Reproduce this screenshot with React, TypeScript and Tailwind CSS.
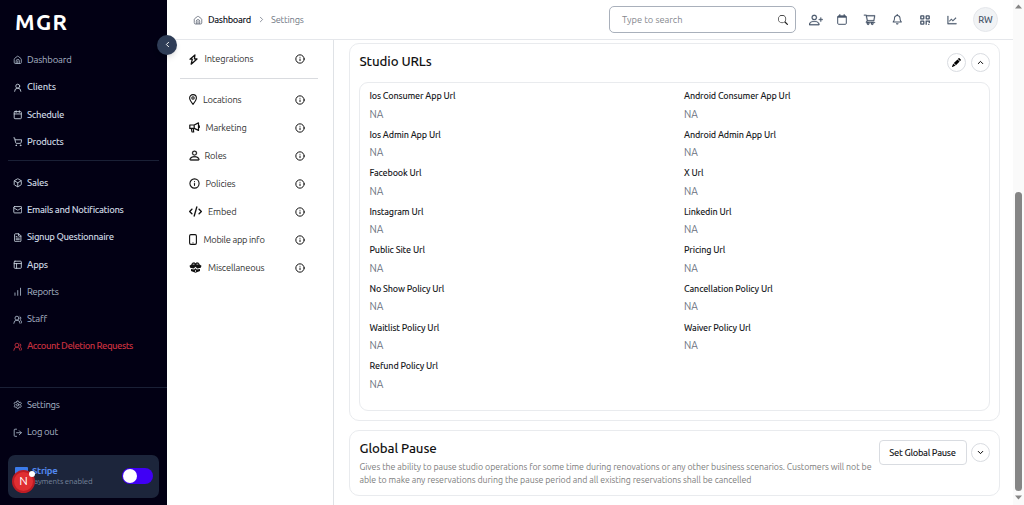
import React from "react";
import {
  UserRound, Calendar, ShoppingCart, Box, Mail, FileText, PanelsTopLeft,
  ChartNoAxesColumnIncreasing, UsersRound, Settings, LogOut, ChevronLeft,
  ChevronRight, ChevronUp, ChevronDown, Info,
} from "lucide-react";
import { BsPersonPlus, BsSearch, BsPencilFill, BsPerson } from "react-icons/bs";
import { FaRegBell } from "react-icons/fa";
import { FaCode } from "react-icons/fa6";
import { AiOutlineShoppingCart, AiOutlineLineChart } from "react-icons/ai";

type IconProps = { className?: string; strokeWidth?: number };
type Icon = React.ComponentType<IconProps>;
type Item = { icon: Icon; label: string; cls: string };

function House({ className }: IconProps) {
  return (
    <svg className={className} viewBox="0 0 24 24" fill="none" stroke="currentColor" strokeWidth="2.1" strokeLinejoin="round" strokeLinecap="round">
      <path d="M3 10.5a2 2 0 0 1 .8-1.6l7-5.4a2 2 0 0 1 2.4 0l7 5.4a2 2 0 0 1 .8 1.6V19a2.5 2.5 0 0 1-2.5 2.5h-13A2.5 2.5 0 0 1 3 19z" />
      <path d="M8 21v-6a4 4 0 0 1 8 0v6M12 15v6" />
    </svg>
  );
}
function Bolt({ className }: IconProps) {
  return (
    <svg className={className} viewBox="0 0 10 12" fill="none" stroke="currentColor" strokeWidth="1.4" strokeLinejoin="round">
      <path d="M6.6.9 1.1 5.7h2.6L2.4 11.2 8.9 5.4H6z" />
    </svg>
  );
}
function Pin({ className }: IconProps) {
  return (
    <svg className={className} viewBox="0 0 8 11" fill="none" stroke="currentColor" strokeWidth="1.1" strokeLinejoin="round">
      <path d="M4 10.3C2.3 8.2.6 6 .6 4a3.4 3.4 0 0 1 6.8 0c0 2-1.7 4.2-3.4 6.3z" />
      <circle cx="4" cy="4" r="1.2" />
    </svg>
  );
}
function Megaphone({ className }: IconProps) {
  return (
    <svg className={className} viewBox="0 0 11 11" fill="none" stroke="currentColor" strokeWidth="1.2" strokeLinejoin="round" strokeLinecap="round">
      <path d="M.8 3h4.4L9.5.9v7.5L5.2 6.4H.8zM5.2 3v3.4M2.3 6.5l.7 3.5h1.7L4.2 6.5M10.3 3.8v1.6" />
    </svg>
  );
}
function Phone({ className }: IconProps) {
  return (
    <svg className={className} viewBox="0 0 8 11" fill="none" stroke="currentColor">
      <rect x=".6" y=".6" width="6.8" height="9.8" rx="1.3" strokeWidth="1.1" />
      <path d="M3.2 8.9h1.6" strokeWidth=".6" />
    </svg>
  );
}
function OpenBox({ className }: IconProps) {
  return (
    <svg className={className} viewBox="0 0 13 11" fill="currentColor">
      <path d="M2.4 2.6C2.8.9 4.2.2 5.5.4l1 .9 1-.9c1.400-.2 2.700.5 3.100 2.200l1.900 1.200-.7 2-3.600.7-1.700-1.700-1.700 1.700-3.600-.7-.7-2z" />
      <path d="M2 6.900l3.200.6 1.300-1.300 1.300 1.300 3.200-.6v2.200L6.500 10.800 2 9.100z" />
      <path d="M3.700 2.200h1.800M7.500 2.200h1.800M6.500 8v2" stroke="white" strokeWidth=".7" />
    </svg>
  );
}
function CalendarTop({ className }: IconProps) {
  return (
    <svg className={className} viewBox="0 0 10 11" fill="none" stroke="currentColor">
      <rect x=".7" y="1.9" width="8.6" height="8.4" rx="1" strokeWidth="1" />
      <path d="M.7 2.8h8.6" strokeWidth="1.8" />
      <path d="M2.8.3v2M7.2.3v2" strokeWidth="1.2" />
    </svg>
  );
}
function Qr({ className }: IconProps) {
  return (
    <svg className={className} viewBox="0 0 10 10" fill="none" stroke="currentColor" strokeWidth="1.3">
      <rect x=".8" y=".8" width="3" height="3" rx=".4" />
      <rect x="6.2" y=".8" width="3" height="3" rx=".4" />
      <rect x=".8" y="6.2" width="3" height="3" rx=".4" />
      <path d="M5.6 6.2h3.7v1.8M6.2 6v3.7M8.2 9.3h1.2" />
    </svg>
  );
}

const primary: Item[] = [
  { icon: House, label: "Dashboard", cls: "text-[#a9b5c6] tracking-[-0.2px]" },
  { icon: UserRound, label: "Clients", cls: "text-[#cbd5e1] font-medium tracking-[-0.18px]" },
  { icon: Calendar, label: "Schedule", cls: "text-[#cbd5e1] font-medium tracking-[-0.32px]" },
  { icon: ShoppingCart, label: "Products", cls: "text-[#cbd5e1] font-medium tracking-[-0.3px]" },
];
const secondary: Item[] = [
  { icon: Box, label: "Sales", cls: "text-[#cbd5e1] font-medium tracking-[-0.28px]" },
  { icon: Mail, label: "Emails and Notifications", cls: "text-[#cbd5e1] font-medium tracking-[-0.36px]" },
  { icon: FileText, label: "Signup Questionnaire", cls: "text-[#cbd5e1] font-medium tracking-[-0.36px]" },
  { icon: PanelsTopLeft, label: "Apps", cls: "text-[#cbd5e1] font-medium tracking-[-0.25px]" },
  { icon: ChartNoAxesColumnIncreasing, label: "Reports", cls: "text-[#a9b5c6] tracking-[-0.3px]" },
  { icon: UsersRound, label: "Staff", cls: "text-[#a9b5c6] tracking-[-0.2px]" },
  { icon: UsersRound, label: "Account Deletion Requests", cls: "text-[#c7303f] font-medium tracking-[-0.48px]" },
];
const footer: Item[] = [
  { icon: Settings, label: "Settings", cls: "text-[#a9b5c6] tracking-[-0.3px]" },
  { icon: LogOut, label: "Log out", cls: "text-[#a9b5c6] tracking-[-0.25px]" },
];

function NavRow({ icon: I, label, cls }: Item) {
  return (
    <a className={`flex h-[27.3px] items-center gap-[5px] pl-[12.5px] text-[9.5px] whitespace-nowrap ${cls}`}>
      <I className="size-[9.5px] shrink-0" strokeWidth={2.2} />
      <span>{label}</span>
    </a>
  );
}

function Sidebar() {
  return (
    <aside className="flex h-full w-[167px] shrink-0 flex-col bg-[#020014]">
      <div className="h-[46.6px] pt-[7px] pl-[15px] text-[22px] leading-[30px] font-semibold tracking-[1.3px] text-white">MGR</div>
      <nav>{primary.map((i) => <NavRow key={i.label} {...i} />)}</nav>
      <div className="mx-2 mt-1 mb-[8.4px] h-px bg-[#1a2036]" />
      <nav>{secondary.map((i) => <NavRow key={i.label} {...i} />)}</nav>
      <div className="mt-auto h-[118px] border-t border-[#1a2036] pt-[3.4px]">
        {footer.map((i) => <NavRow key={i.label} {...i} />)}
        <div className="relative mx-2 mt-[8.6px] flex h-[43px] items-center justify-between rounded-[7px] bg-[#1c253b] pr-[6.5px] pl-[7px]">
          <div className="flex items-start gap-[4px]">
            <span className="mt-px h-[11px] w-[13px] rounded-[1px] bg-[#3b7bea]" />
            <div className="-mt-px flex flex-col">
              <span className="text-[9.5px] leading-[11px] font-semibold tracking-[-0.3px] text-[#5288ee]">Stripe</span>
              <span className="pl-[2px] text-[8px] leading-[11px] tracking-[-0.18px] text-[#76839a]">ayments enabled</span>
            </div>
          </div>
          <span className="flex h-[16px] w-[31px] items-center rounded-full bg-[#4000f5] pl-px">
            <span className="size-[14px] rounded-full bg-white" />
          </span>
          <span className="absolute top-[15px] left-[4px] flex size-[23px] items-center justify-center rounded-full border-2 border-[#bd1c24] bg-[#e02e32] text-[12px] text-white">N</span>
          <span className="absolute top-[16px] left-[21px] size-[6px] rounded-full bg-white" />
        </div>
      </div>
    </aside>
  );
}

function Header() {
  return (
    <header className="flex h-10 shrink-0 items-center border-b border-[#e5e7eb] pr-[15px] pl-[26px] text-[9.3px]">
      <House className="size-[10px] text-[#6b7280]" />
      <span className="ml-[5px] font-medium tracking-[-0.35px] text-[#14181f]">Dashboard</span>
      <ChevronRight className="ml-[6.5px] size-[9px] text-[#6b7280]" />
      <span className="ml-[4.5px] tracking-[-0.2px] text-[#727986]">Settings</span>
      <div className="ml-auto flex h-[27px] w-[187px] items-center justify-between rounded-[5px] border border-[#a9b0bb] pr-[7px] pl-3">
        <span className="text-[#85888e]">Type to search</span>
        <BsSearch className="size-[10px] text-[#222]" />
      </div>
      <div className="ml-[12.5px] flex items-center text-[#475569]">
        <BsPersonPlus className="size-[14px] stroke-current stroke-[0.3]" />
        <CalendarTop className="ml-[14.5px] h-[11px] w-[10px]" />
        <AiOutlineShoppingCart className="ml-[16px] size-[13px] stroke-current stroke-[20]" />
        <FaRegBell className="ml-[16px] size-[10.5px]" />
        <Qr className="ml-[17.5px] size-[10px]" />
        <AiOutlineLineChart className="ml-[16px] size-[12px] stroke-current stroke-[20]" />
      </div>
      <span className="ml-[15px] flex size-[25px] items-center justify-center rounded-full border border-[#e5e7eb] bg-[#f1f3f5] text-[9.3px] font-medium text-[#475569]">RW</span>
    </header>
  );
}

const settings: Item[] = [
  { icon: Pin, label: "Locations", cls: "h-[11px] w-[8px] mr-[6px]" },
  { icon: Megaphone, label: "Marketing", cls: "h-[11px] w-[11px] mr-[5.5px]" },
  { icon: BsPerson, label: "Roles", cls: "h-[13px] w-[13px] -ml-[1.5px] mr-[4px] stroke-current stroke-[0.4]" },
  { icon: Info, label: "Policies", cls: "h-[11px] w-[11px] mr-[5.5px]" },
  { icon: FaCode, label: "Embed", cls: "h-[11px] w-[13px] mr-[6px]" },
  { icon: Phone, label: "Mobile app info", cls: "h-[11px] w-[8px] mr-[6.5px]" },
  { icon: OpenBox, label: "Miscellaneous", cls: "h-[11px] w-[13px] mr-[6px]" },
];

function SettingRow({ icon: I, label, cls }: Item) {
  return (
    <div className="flex h-7 items-center pr-[13px] pl-[9px] text-[9.3px] whitespace-nowrap text-[#333]">
      <I className={`shrink-0 text-[#111] ${cls}`} strokeWidth={2.4} />
      <span className={label === "Mobile app info" ? "tracking-[-0.28px]" : "tracking-[-0.17px]"}>{label}</span>
      <Info className="ml-auto size-[10px] text-[#111]" strokeWidth={2.4} />
    </div>
  );
}

const urls = [
  "Ios Consumer App Url", "Android Consumer App Url", "Ios Admin App Url", "Android Admin App Url",
  "Facebook Url", "X Url", "Instagram Url", "Linkedin Url", "Public Site Url", "Pricing Url",
  "No Show Policy Url", "Cancellation Policy Url", "Waitlist Policy Url", "Waiver Policy Url", "Refund Policy Url",
];

function RoundButton({ children }: { children: React.ReactNode }) {
  return <button className="flex size-[19px] shrink-0 items-center justify-center rounded-full border border-[#d9dce1] text-black">{children}</button>;
}

export default function App() {
  return (
    <div className="relative flex h-[505px] w-[1024px] overflow-hidden bg-white font-['Ubuntu','Noto_Sans',sans-serif]">
      <Sidebar />
      <div className="-ml-px flex min-w-0 flex-1 flex-col pl-px">
        <Header />
        <div className="flex min-h-0 flex-1">
          <div className="w-[167px] shrink-0 border-r border-[#dfe2e6] pt-[5px] pr-[15px] pl-[13px]">
            <SettingRow icon={Bolt} label="Integrations" cls="h-[11px] w-[9px] mr-[6.5px]" />
            <div className="mt-[5px] mb-[6.5px] h-px bg-[#d9dbdf]" />
            {settings.map((i) => <SettingRow key={i.label} {...i} />)}
          </div>
          <main className="flex-1 pt-[3px] pr-[13px] pl-[15px]">
            <section className="h-[378px] rounded-[10px] border border-[#e9ebee] px-[9px]">
              <div className="flex h-[38px] items-center">
                <h2 className="-mt-[3px] ml-[0.5px] text-[13.3px] font-medium tracking-[-0.1px] text-[#111]">Studio URLs</h2>
                <span className="-mt-px ml-auto flex gap-[5px]">
                  <RoundButton><BsPencilFill className="size-[9px]" /></RoundButton>
                  <RoundButton><ChevronUp className="size-[9px]" strokeWidth={2.6} /></RoundButton>
                </span>
              </div>
              <div className="grid h-[329px] auto-rows-[38.6px] grid-cols-[314.5px_1fr] rounded-[9px] border border-[#e9ebee] pt-[6px] pl-[9.5px]">
                {urls.map((u) => (
                  <div key={u}>
                    <div className="text-[9px] leading-[15px] font-medium tracking-[-0.15px] text-[#17191d]">{u}</div>
                    <div className="mt-[1.5px] text-[10.2px] leading-[16px] text-[#6b7280]">NA</div>
                  </div>
                ))}
              </div>
            </section>
            <section className="mt-[9px] flex h-[66px] rounded-[10px] border border-[#e9ebee] px-[9px]">
              <div className="w-[519px] shrink-0 pt-[8px] pl-[0.5px]">
                <h2 className="text-[13.3px] leading-[19px] font-medium tracking-[-0.1px] text-[#111]">Global Pause</h2>
                <p className="mt-[3px] text-[8.8px] leading-[12.5px] tracking-[-0.042px] whitespace-nowrap text-[#7d7d7d]">
                  Gives the ability to pause studio operations for some time during renovations or any other business scenarios. Customers will not be<br />
                  able to make any reservations during the pause period and all existing reservations shall be cancelled
                </p>
              </div>
              <div className="mt-[9px] ml-auto flex h-[25px] items-center gap-[4.5px]">
                <button className="h-[25px] w-[88px] rounded-[4px] border border-[#d9dce1] text-[9.3px] font-medium tracking-[-0.3px] whitespace-nowrap text-[#17191d]">Set Global Pause</button>
                <RoundButton><ChevronDown className="size-[9px]" strokeWidth={2.6} /></RoundButton>
              </div>
            </section>
          </main>
        </div>
      </div>
      <div className="flex w-[11px] shrink-0 flex-col items-center bg-[#fafafa]">
        <svg className="mt-[4px] h-[5px] w-[7px]" viewBox="0 0 7 5"><path d="M0 4.5 3.5.5 7 4.5z" fill="#858585" /></svg>
        <div className="mt-[183px] h-[299px] w-[7px] rounded-full bg-[#858585]" />
        <svg className="mt-[4px] h-[5px] w-[7px]" viewBox="0 0 7 5"><path d="M0 .5 3.5 4.5 7 .5z" fill="#858585" /></svg>
      </div>
      <button className="absolute top-[34.5px] left-[157px] flex size-[20px] items-center justify-center rounded-full bg-[#2f3d57] text-white shadow-md">
        <ChevronLeft className="size-[9px]" strokeWidth={2.5} />
      </button>
    </div>
  );
}
